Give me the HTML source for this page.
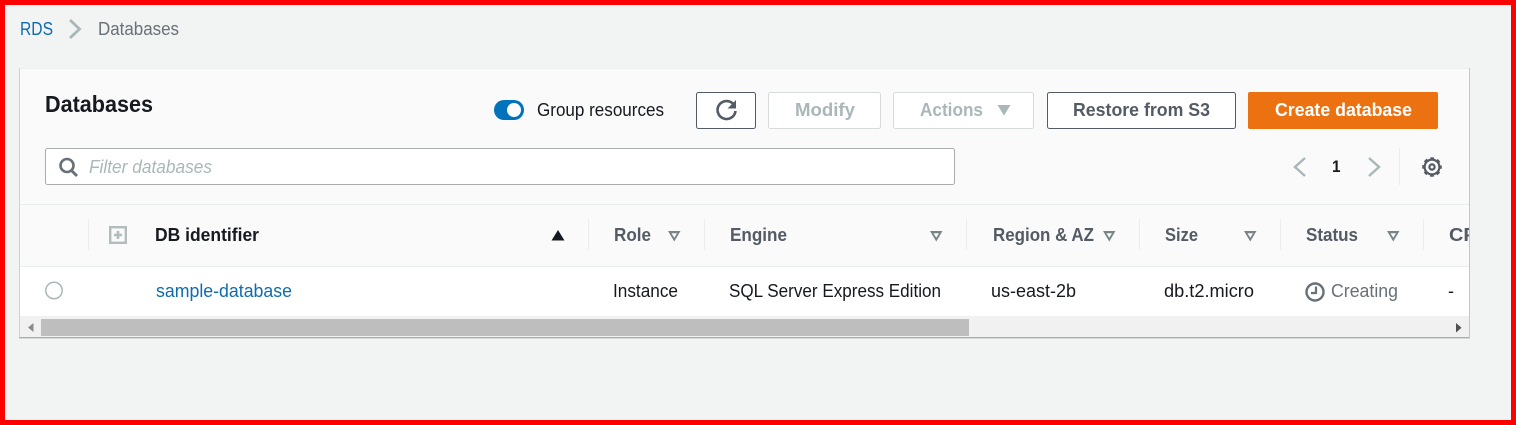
<!DOCTYPE html>
<html><head><meta charset="utf-8"><title>RDS Databases</title>
<style>
html,body{margin:0;padding:0;width:1516px;height:425px;overflow:hidden;background:#f2f3f3}
svg{display:block}
text{font-family:"Liberation Sans",sans-serif;font-size:18px}
.b{font-weight:700}
</style></head><body>
<svg width="1516" height="425" viewBox="0 0 1516 425" xmlns="http://www.w3.org/2000/svg">
<rect width="1516" height="425" fill="#f2f3f3"/>
<!-- breadcrumb -->
<text x="20" y="35" fill="#0f6cae" textLength="33" lengthAdjust="spacingAndGlyphs">RDS</text>
<path d="M70 20l9.500 9-9.500 9" fill="none" stroke="#aab7b8" stroke-width="2.800"/>
<text x="98" y="35" fill="#687078" textLength="81" lengthAdjust="spacingAndGlyphs">Databases</text>
<!-- card -->
<rect x="20" y="68" width="1450" height="270" fill="#fafafa"/>
<rect x="20" y="68" width="1450" height="1" fill="#eef0f0"/>
<rect x="19" y="68" width="1" height="270" fill="#d0d2d2"/>
<rect x="19" y="337" width="1451" height="1" fill="#a9adad"/>
<rect x="19" y="338" width="1451" height="1" fill="#d6d8d8"/>
<text x="45" y="112" class="b" style="font-size:23px" fill="#16191f" textLength="108" lengthAdjust="spacingAndGlyphs">Databases</text>
<!-- toggle -->
<rect x="494" y="100" width="30" height="20" rx="10" fill="#0073bb"/>
<circle cx="514" cy="110" r="7" fill="#fff"/>
<text x="537" y="116" fill="#16191f" textLength="127" lengthAdjust="spacingAndGlyphs">Group resources</text>
<!-- refresh -->
<rect x="696.500" y="92.500" width="59" height="36" rx="2" fill="#fff" stroke="#545b64"/>
<path d="M734 105a9 9 0 1 0 1.500 6" fill="none" stroke="#545b64" stroke-width="2.600"/>
<path d="M736 100v8.500h-8.500z" fill="#545b64"/>
<!-- modify / actions -->
<rect x="768.500" y="92.500" width="112" height="36" rx="2" fill="#fff" stroke="#d5dbdb"/>
<text x="795" y="116" class="b" fill="#aab7b8" textLength="60" lengthAdjust="spacingAndGlyphs">Modify</text>
<rect x="893.500" y="92.500" width="140" height="36" rx="2" fill="#fff" stroke="#d5dbdb"/>
<text x="920" y="116" class="b" fill="#aab7b8" textLength="63" lengthAdjust="spacingAndGlyphs">Actions</text>
<path d="M997.500 105h13l-6.500 10.500z" fill="#aab7b8"/>
<!-- restore -->
<rect x="1047.500" y="92.500" width="188" height="36" rx="2" fill="#fff" stroke="#545b64"/>
<text x="1073" y="116" class="b" fill="#545b64" textLength="137" lengthAdjust="spacingAndGlyphs">Restore from S3</text>
<!-- create -->
<rect x="1248" y="92" width="190" height="37" rx="2" fill="#ec7211"/>
<text x="1275" y="116" class="b" fill="#fff" textLength="137" lengthAdjust="spacingAndGlyphs">Create database</text>
<!-- filter -->
<rect x="45.500" y="148.500" width="909" height="36" rx="2" fill="#fff" stroke="#a9adad"/>
<circle cx="67" cy="165.500" r="6.500" fill="none" stroke="#687078" stroke-width="2.600"/>
<path d="M71.500 170.500l5.500 5.500" fill="none" stroke="#687078" stroke-width="2.800"/>
<text x="89" y="173" fill="#aab7b8" font-style="italic" textLength="123" lengthAdjust="spacingAndGlyphs">Filter databases</text>
<!-- pagination -->
<path d="M1305 158l-10 9 10 9" fill="none" stroke="#aab7b8" stroke-width="2.400"/>
<text x="1332" y="172" class="b" style="font-size:17px" fill="#16191f" textLength="8.500" lengthAdjust="spacingAndGlyphs">1</text>
<path d="M1369 158l10 9-10 9" fill="none" stroke="#aab7b8" stroke-width="2.400"/>
<rect x="1399" y="148" width="1" height="37" fill="#eaeded"/>
<circle cx="1432" cy="167" r="7.400" fill="none" stroke="#545b64" stroke-width="2.200"/>
<circle cx="1432" cy="167" r="8.600" fill="none" stroke="#545b64" stroke-width="2.400" stroke-dasharray="3.600 3.150" stroke-dashoffset="1.800"/>
<circle cx="1432" cy="167" r="2.600" fill="none" stroke="#545b64" stroke-width="2.200"/>
<!-- header -->
<rect x="20" y="204" width="1449" height="1" fill="#eaeded"/>
<rect x="20" y="266" width="1449" height="1" fill="#eaeded"/>
<g fill="#eaeded">
<rect x="88" y="219" width="1" height="31"/>
<rect x="588" y="219" width="1" height="31"/>
<rect x="704" y="219" width="1" height="31"/>
<rect x="966" y="219" width="1" height="31"/>
<rect x="1139" y="219" width="1" height="31"/>
<rect x="1280" y="219" width="1" height="31"/>
<rect x="1423" y="219" width="1" height="31"/>
</g>
<rect x="110.200" y="227.200" width="15.600" height="15.600" fill="#fafafa" stroke="#b3bcbc" stroke-width="2.400"/>
<path d="M118 231v8M114 235h8" stroke="#b3bcbc" stroke-width="2.600"/>
<text x="155" y="241" class="b" fill="#16191f" textLength="104" lengthAdjust="spacingAndGlyphs">DB identifier</text>
<path d="M558 230l6.500 10.500h-13z" fill="#16191f"/>
<text x="614" y="241" class="b" fill="#545b64" textLength="37" lengthAdjust="spacingAndGlyphs">Role</text>
<text x="730" y="241" class="b" fill="#545b64" textLength="57" lengthAdjust="spacingAndGlyphs">Engine</text>
<text x="993" y="241" class="b" fill="#545b64" textLength="101" lengthAdjust="spacingAndGlyphs">Region &amp; AZ</text>
<text x="1165" y="241" class="b" fill="#545b64" textLength="33" lengthAdjust="spacingAndGlyphs">Size</text>
<text x="1306" y="241" class="b" fill="#545b64" textLength="52" lengthAdjust="spacingAndGlyphs">Status</text>
<g fill="#778585" fill-rule="evenodd">
<path d="M668 231h12.500l-6.250 10.500zM671.500 233.200h5.500l-2.750 4.600z"/>
<path d="M930 231h12.500l-6.250 10.500zM933.500 233.200h5.500l-2.750 4.600z"/>
<path d="M1103 231h12.500l-6.250 10.500zM1106.500 233.200h5.500l-2.750 4.600z"/>
<path d="M1244 231h12.500l-6.250 10.500zM1247.500 233.200h5.500l-2.750 4.600z"/>
<path d="M1387 231h12.500l-6.250 10.500zM1390.500 233.200h5.500l-2.750 4.600z"/>
</g>
<!-- row -->
<rect x="20" y="267" width="1449" height="49" fill="#fff"/>
<circle cx="54" cy="290.500" r="8.200" fill="#fff" stroke="#aab7b8" stroke-width="1.500"/>
<text x="156" y="297" fill="#0f6cae" textLength="136" lengthAdjust="spacingAndGlyphs">sample-database</text>
<text x="613" y="297" fill="#16191f" textLength="65" lengthAdjust="spacingAndGlyphs">Instance</text>
<text x="729" y="297" fill="#16191f" textLength="212" lengthAdjust="spacingAndGlyphs">SQL Server Express Edition</text>
<text x="991" y="297" fill="#16191f" textLength="85" lengthAdjust="spacingAndGlyphs">us-east-2b</text>
<text x="1164" y="297" fill="#16191f" textLength="90" lengthAdjust="spacingAndGlyphs">db.t2.micro</text>
<circle cx="1315" cy="292" r="8.500" fill="none" stroke="#687078" stroke-width="2.400"/>
<path d="M1316 286.500v6.500h-5" fill="none" stroke="#687078" stroke-width="2.200"/>
<text x="1331" y="297" fill="#687078" textLength="67" lengthAdjust="spacingAndGlyphs">Creating</text>
<text x="1448" y="297" fill="#16191f" textLength="6" lengthAdjust="spacingAndGlyphs">-</text>
<!-- scrollbar -->
<rect x="20" y="316" width="1449" height="21" fill="#f1f1f1"/>
<rect x="41" y="319" width="928" height="17" fill="#bebebe"/>
<path d="M33.500 323v9l-5.500-4.500z" fill="#8a8a8a"/>
<path d="M1456 323v9.500l5.500-4.750z" fill="#505050"/>
<!-- clipped column label, drawn last so it ends at the card edge -->
<svg x="1449" y="220" width="20" height="30"><text x="0" y="21" class="b" fill="#545b64" textLength="42" lengthAdjust="spacingAndGlyphs">CPU</text></svg>
<rect x="1469" y="68" width="1" height="270" fill="#c4c6c6"/>
<!-- red frame -->
<rect x="2.500" y="2.500" width="1511" height="420" fill="none" stroke="#ff0000" stroke-width="5"/>
</svg>
</body></html>
